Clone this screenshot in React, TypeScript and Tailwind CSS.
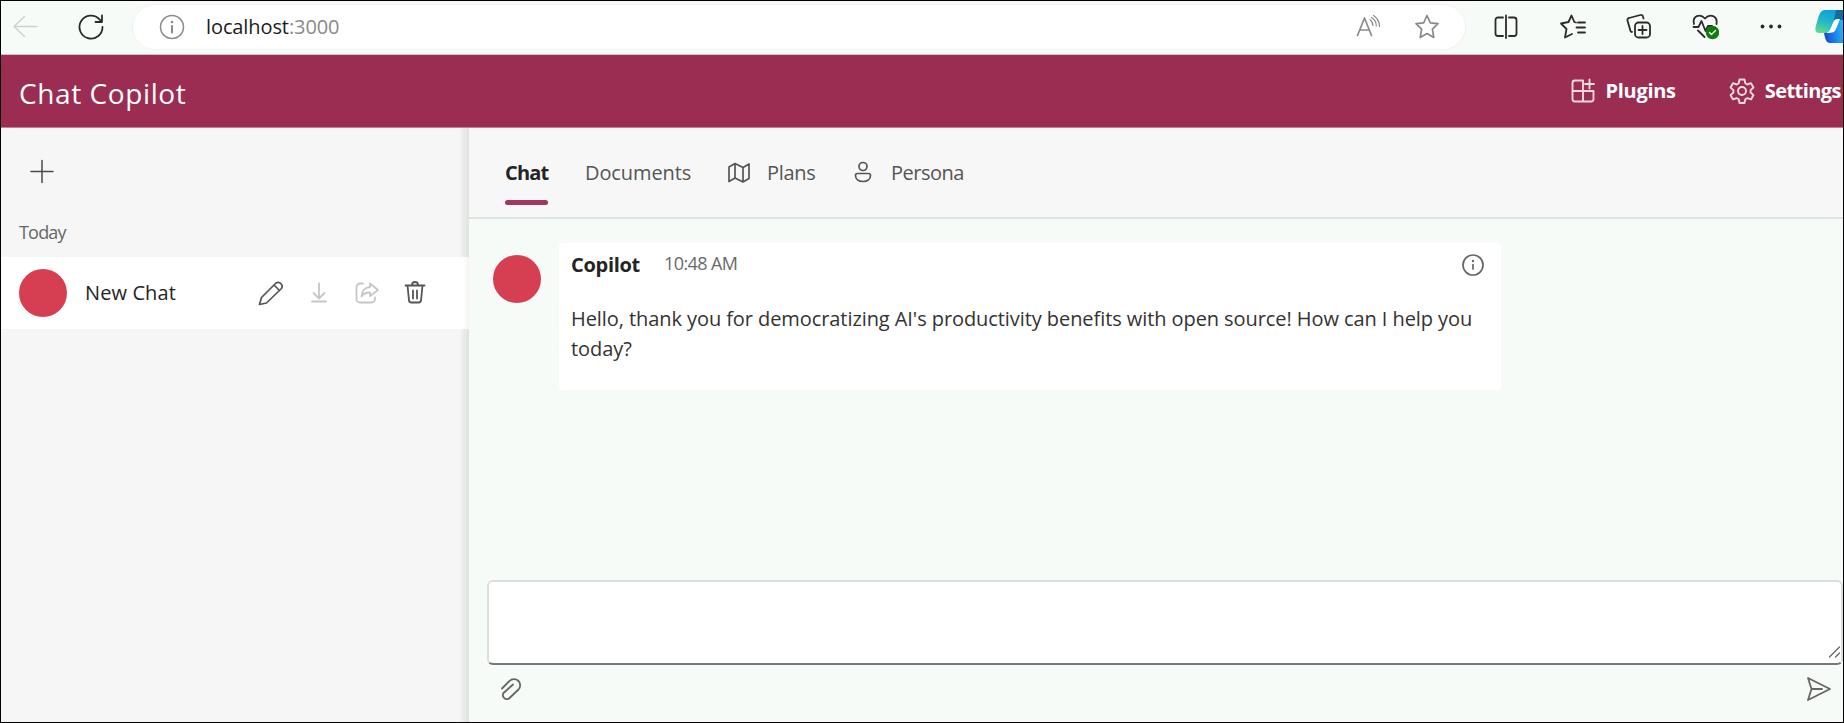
import React, { type ReactNode } from "react";

type IconProps = { w?: number; h?: number; sw?: number; className?: string; children: ReactNode };

function Icon({ w = 28, h = 28, sw = 1.5, className = "", children }: IconProps) {
  return (
    <svg
      width={w}
      height={h}
      viewBox={`0 0 ${w} ${h}`}
      fill="none"
      stroke="currentColor"
      strokeWidth={sw}
      strokeLinecap="round"
      strokeLinejoin="round"
      className={`block shrink-0 ${className}`}
    >
      {children}
    </svg>
  );
}

function BrowserBar() {
  return (
    <div className="flex h-[54px] shrink-0 items-center border-b border-[#c9c6c8] bg-[#f6fbf7] pb-0.5 text-[#2b2b2b]">
      <Icon className="ml-2.5 text-[#cdd2ce]" sw={1.4}>
        <path d="M26 13.500H3M13.500 3.500L3 13.500L13.500 23.500" />
      </Icon>
      <Icon className="ml-[38px]" sw={1.8}>
        <path d="M25.500 14A11.500 11.500 0 1 1 22.500 6.300L25 9M25 2.500V9H18.500" />
      </Icon>
      <div className="ml-[27px] flex h-[46px] w-[1334px] shrink-0 items-center rounded-full border border-[#f3f1f3] bg-white text-[#8a8a8a]">
        <Icon className="ml-[25px]">
          <circle cx="14" cy="14" r="11.500" />
          <path d="M14 13v6.500" strokeWidth="2" />
          <circle cx="14" cy="9" r="1.300" fill="currentColor" stroke="none" />
        </Icon>
        <span className="ml-5 whitespace-nowrap text-[20px] tracking-[-0.1px] text-[#8a8a8a]">
          <span className="text-[#1b1b1b]">localhost</span>:3000
        </span>
        <Icon className="ml-auto" sw={1.7}>
          <path d="M2.500 22.500L9.500 5L16.500 22.500M5 17H14" />
          <path d="M15 6.500A8 8 0 0 1 18 12.500M18.500 2.500A13 13 0 0 1 24.500 13.500M16.500 4.500A10 10 0 0 1 21.300 13" strokeWidth="1.200" />
        </Icon>
        <Icon className="mr-6 ml-[30px]" sw={1.7}>
          <path d="M14 2.500L17.300 9.800L25 10.700L19.400 16.100L20.800 24.500L14 20.600L7.200 24.500L8.600 16.100L3 10.700L10.700 9.800Z" />
        </Icon>
      </div>
      <Icon className="ml-[26px]" sw={1.8}>
        <path d="M11 4.500H6a2.500 2.500 0 0 0-2.500 2.500v13.500A2.500 2.500 0 0 0 6 23h5M17 4.500h5a2.500 2.500 0 0 1 2.500 2.500v13.500A2.500 2.500 0 0 1 22 23h-5M14 2.500v22.500" />
      </Icon>
      <Icon className="ml-[39px]" sw={1.8}>
        <path d="M17 9.500L15.300 9L12.500 2.500L9.500 9L2 10.500L7.500 16L6 24.500L13 21M19 9.500H26M17.500 14.500H26M19 19.500H26" />
      </Icon>
      <Icon className="ml-[38px]" sw={1.8}>
        <rect x="10" y="9.500" width="15" height="15" rx="3.500" />
        <path d="M17.500 13v8M13.500 17h8M18.500 5.500L18 3.500a2 2 0 0 0-2.500-1.500L4 5a2 2 0 0 0-1.500 2.500L5.500 18a2 2 0 0 0 1.500 1" />
      </Icon>
      <Icon className="ml-[38px]" sw={1.8}>
        <path d="M3 11C1 3 9 0 14 5.500C19 0 27 3 25.500 11M2.500 14h5l3-6 4 10 2.500-5h4M7 17.500l6.500 6.500" />
        <circle cx="21.500" cy="19.500" r="6.700" fill="#107c10" stroke="none" />
        <path d="M18.500 19.500l2 2 4-4" stroke="#fff" strokeWidth="1.400" />
      </Icon>
      <Icon className="ml-[38px]">
        <g fill="currentColor" stroke="none">
          <circle cx="5.500" cy="13.500" r="1.900" />
          <circle cx="14" cy="13.500" r="1.900" />
          <circle cx="22.500" cy="13.500" r="1.900" />
        </g>
      </Icon>
      <svg width="28" height="36" viewBox="0 0 28 36" className="ml-[30px] block shrink-0">
        <defs>
          <linearGradient id="copilotLeaf" x1="0.600" y1="0" x2="0.200" y2="1">
            <stop offset="0" stopColor="#0a9fdc" />
            <stop offset="0.500" stopColor="#21b5c7" />
            <stop offset="1" stopColor="#5fdc8c" />
          </linearGradient>
          <linearGradient id="copilotBase" x1="0" y1="0.600" x2="1" y2="0.400">
            <stop offset="0" stopColor="#1747d1" />
            <stop offset="1" stopColor="#1fb6fb" />
          </linearGradient>
        </defs>
        <path d="M9 24L16 10H28V34H15C11 34 10 29 9 24Z" fill="url(#copilotBase)" />
        <path d="M10 1H28V10H23C18 10 17 24 10 24H4C-1 24 0 19 2 13C4 6 5 1 10 1Z" fill="url(#copilotLeaf)" />
        <path d="M21 1H28V11H19Z" fill="#0f6c9e" />
        <path d="M22 10H25L21 20C20 23 18 24 11 24C17 23 17 10 22 10Z" fill="#fff" />
      </svg>
    </div>
  );
}

function AppHeader() {
  return (
    <header className="flex h-[73px] shrink-0 items-center border-b border-[#b9839a] bg-[#9a2d51] text-white">
      <h1 className="ml-[18px] pt-1 whitespace-nowrap text-[28px] tracking-[0.6px]">Chat Copilot</h1>
      <div className="mr-0.5 ml-auto flex items-center whitespace-nowrap text-[20px] font-bold">
        <Icon className="text-[#f0d9e1]" sw={1.9}>
          <path d="M14 14V3.500H6A2.500 2.500 0 0 0 3.500 6V22A2.500 2.500 0 0 0 6 24.500H22A2.500 2.500 0 0 0 24.500 22V14H3.500M14 14V24.500M20.500 2.500V11.500M16 7H25" />
        </Icon>
        <span className="ml-[9px] tracking-[-0.3px]">Plugins</span>
        <Icon className="ml-[52px] text-[#f0d9e1]" sw={1.9}>
          <circle cx="14" cy="14" r="4" />
          <path d="M11.500 2.500h5l.8 3.800 2 1.200 3.700-1.300 2.500 4.300-2.900 2.600v2.400l2.900 2.600-2.500 4.300-3.700-1.300-2 1.200-.8 3.700h-5l-.8-3.700-2-1.200L5 22.400l-2.500-4.300 2.900-2.600v-2.400L2.500 10.500 5 6.200 8.700 7.500l2-1.200z" />
        </Icon>
        <span className="ml-[9px] tracking-[-0.55px]">Settings</span>
      </div>
    </header>
  );
}

function Sidebar() {
  return (
    <aside className="flex w-[468px] shrink-0 flex-col bg-[linear-gradient(to_right,#f6f6f6_458px,#eeefee_461px,#dfe2df_468px)]">
      <Icon className="mt-[29px] ml-[27px] text-[#4a4a4a]">
        <path d="M14 3.500v22M3 14.500h22" />
      </Icon>
      <div className="mt-[34px] ml-[18px] h-[38px] text-[18px] leading-[26px] tracking-[-0.8px] text-[#666]">Today</div>
      <div className="flex h-[72px] shrink-0 items-center bg-[linear-gradient(to_right,#ffffff_462px,#f3f4f3_468px)] text-[#555]">
        <div className="ml-[18px] size-12 rounded-full bg-[#d63e52]" />
        <span className="ml-[18px] w-[160px] whitespace-nowrap text-[20px] tracking-[0.1px] text-[#242424]">New Chat</span>
        <Icon className="ml-3" sw={1.7}>
          <path d="M2.500 25.500L4.500 18.500L19 4A4 4 0 0 1 24.500 9.500L9.500 24ZM17 6l5.500 5.500" />
        </Icon>
        <Icon className="ml-5 text-[#c4c8c5]" sw={1.8}>
          <path d="M14 4.500v15M8.500 14l5.500 5.500 5.500-5.500M7 22.500h14" />
        </Icon>
        <Icon className="ml-5 text-[#c4c8c5]" sw={1.8}>
          <path d="M10 4.500H7A3.500 3.500 0 0 0 3.500 8V20A3.500 3.500 0 0 0 7 23.500H18.500A3.500 3.500 0 0 0 22 20V18.500M17 4.500L25 11L17 17V13.500C12.500 13.500 10 15 8.500 17.500C8.500 12 12 8.500 17 8Z" />
        </Icon>
        <Icon className="ml-5" sw={1.8}>
          <path d="M4.500 6.500h19M6.500 6.500l1.500 15a2.500 2.500 0 0 0 2.500 2h7a2.500 2.500 0 0 0 2.500-2l1.500-15M11 6a3 3 0 0 1 6 0M12 11.500v8M16 11.500v8" />
        </Icon>
      </div>
    </aside>
  );
}

function Tabs() {
  return (
    <nav className="flex h-[91px] shrink-0 items-center border-b-2 border-[#e3e3e3] bg-[#f7f7f7] whitespace-nowrap text-[20px] text-[#555]">
      <div className="ml-[36px] flex w-[44px] flex-col pt-[18px] text-[#242424]">
        <span className="font-bold tracking-[-0.8px]">Chat</span>
        <span className="mt-3 h-[5px] w-[43px] rounded-full bg-[#9f385c]" />
      </div>
      <span className="ml-9 w-[106px] tracking-[-0.1px]">Documents</span>
      <Icon className="ml-[34px]" sw={1.7}>
        <path d="M4 8L10 4.500L18 8.500L24 5V19.500L18 23L10 19L4 22.500ZM10 4.500V19M18 8.500V23" />
      </Icon>
      <span className="ml-3.5 w-12 tracking-[-0.3px]">Plans</span>
      <Icon className="ml-[34px]" sw={1.7}>
        <circle cx="14" cy="7.500" r="4" />
        <path d="M8.500 14.500h11a2 2 0 0 1 2 2c0 3.500-3 6-7.500 6s-7.500-2.500-7.500-6a2 2 0 0 1 2-2z" />
      </Icon>
      <span className="ml-3.5 tracking-[-0.5px]">Persona</span>
    </nav>
  );
}

function Message() {
  return (
    <div className="flex pt-6 pl-6">
      <div className="mt-3 size-12 shrink-0 rounded-full bg-[#d63e52]" />
      <article className="ml-[18px] h-[147px] w-[942px] rounded bg-white pl-3">
        <div className="flex h-[43px] items-center whitespace-nowrap">
          <span className="w-[93px] text-[20px] font-bold tracking-[-0.3px] text-[#242424]">Copilot</span>
          <span className="-mt-0.5 text-[18px] tracking-[-0.6px] text-[#6a6a6a]">10:48 AM</span>
          <Icon className="mr-3.5 ml-auto text-[#666]" sw={1.7}>
            <circle cx="14" cy="14" r="10" />
            <path d="M14 13.500v4.500" />
            <circle cx="14" cy="10" r="1.200" fill="currentColor" stroke="none" />
          </Icon>
        </div>
        <p className="mt-[18px] whitespace-nowrap text-[20px] leading-[30px] tracking-[-0.075px] text-[#333]">
          Hello, thank you for democratizing AI's productivity benefits with open source! How can I help you
          <br />
          today?
        </p>
      </article>
    </div>
  );
}

function ChatInput() {
  return (
    <div className="mt-auto shrink-0 pl-[18px] text-[#666]">
      <div className="flex h-[85px] w-[1356px] items-end justify-end rounded-md border-2 border-[#dcdedc] border-b-[#777] bg-white">
        <Icon w={14} h={14} sw={1.3} className="mb-1">
          <path d="M2.500 12L12.500 2M8.500 12L12.500 8" />
        </Icon>
      </div>
      <div className="flex h-[57px] items-start justify-between pt-2.5 pr-2.5 pl-2.5">
        <Icon sw={1.8}>
          <path d="M5 13.500L12.500 6a6 6 0 0 1 9 8.500L12 23.500a4 4 0 0 1-5.500-5.500L16 9.500" />
        </Icon>
        <Icon sw={1.8}>
          <path d="M3 3L25 14L3 25L6.500 14ZM6.500 14H17" />
        </Icon>
      </div>
    </div>
  );
}

export default function App() {
  return (
    <div className="flex h-[723px] w-[1844px] flex-col overflow-hidden border border-black bg-[#f6fbf7] font-['Open_Sans','Noto_Sans',sans-serif]">
      <BrowserBar />
      <AppHeader />
      <div className="flex min-h-0 flex-1">
        <Sidebar />
        <main className="flex min-w-0 flex-1 flex-col bg-[#f6fbf7]">
          <Tabs />
          <Message />
          <ChatInput />
        </main>
      </div>
    </div>
  );
}
